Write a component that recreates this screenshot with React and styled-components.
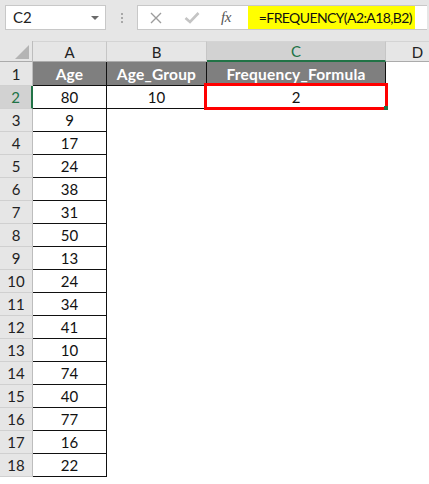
import styled, { createGlobalStyle, css } from 'styled-components'

const ages = [80, 9, 17, 24, 38, 31, 50, 13, 24, 34, 41, 10, 74, 40, 77, 16, 22]

const GlobalStyle = createGlobalStyle`
    html, body {
        margin: 0;
        padding: 0;
        background: #fff;
        overflow: hidden;
    }
    body {
        font-family: Lato, "Liberation Sans", sans-serif;
        width: 429px;
        height: 484px;
    }
`

const App = () => {
    return (
        <Page>
            <GlobalStyle />
            <Toolbar>
                <NameBox>
                    C2
                    <Caret />
                </NameBox>
                <Grip>
                    <span />
                    <span />
                    <span />
                </Grip>
                <FormulaBox>
                    <ToolIcon width="12" height="12" viewBox="0 0 12 12" $left={12}>
                        <path d="M1 1 L11 11 M11 1 L1 11" stroke="#9c9c9c" strokeWidth="1.4" fill="none" />
                    </ToolIcon>
                    <ToolIcon width="16" height="13" viewBox="0 0 16 13" $left={22}>
                        <path d="M1.5 7 L6 11 L14.5 2" stroke="#c4c4c4" strokeWidth="2.6" fill="none" />
                    </ToolIcon>
                    <Fx>fx</Fx>
                    <Formula>=FREQUENCY(A2:A18,B2)</Formula>
                </FormulaBox>
            </Toolbar>
            <Sheet>
                <Corner />
                <ColHead>A</ColHead>
                <ColHead>B</ColHead>
                <ColHead $selected>C</ColHead>
                <ColHead>D</ColHead>

                <RowHead>1</RowHead>
                <Cell $kind="head">Age</Cell>
                <Cell $kind="head">Age_Group</Cell>
                <Cell $kind="head">Frequency_Formula</Cell>
                <Cell />

                <RowHead $selected>2</RowHead>
                <Cell $kind="data">{ages[0]}</Cell>
                <Cell $kind="data">10</Cell>
                <Cell $kind="data" $active>2</Cell>
                <Cell />

                {ages.slice(1).map((age, i) => (
                    <Row key={i} n={i + 3} age={age} />
                ))}
            </Sheet>
        </Page>
    )
}

const Row = ({ n, age }) => (
    <>
        <RowHead>{n}</RowHead>
        <Cell $kind="data">{age}</Cell>
        <Cell />
        <Cell />
        <Cell />
    </>
)

const Page = styled.div`
    width: 429px;
    height: 484px;
    overflow: hidden;
    background: #fff;
`

const Toolbar = styled.div`
    height: 41px;
    box-sizing: border-box;
    background: #e6e6e6;
    display: flex;
    align-items: flex-start;
    padding: 5px 0 0 5px;
`

const NameBox = styled.div`
    position: relative;
    width: 101px;
    height: 25px;
    box-sizing: border-box;
    background: #fff;
    border: 1px solid #c8c8c8;
    padding-left: 7px;
    font-size: 15px;
    line-height: 23px;
    color: #222;
`

const Caret = styled.span`
    position: absolute;
    right: 6px;
    top: 10px;
    width: 0;
    height: 0;
    border-left: 4px solid transparent;
    border-right: 4px solid transparent;
    border-top: 4px solid #6a6a6a;
`

const Grip = styled.div`
    width: 31px;
    height: 25px;
    display: flex;
    flex-direction: column;
    align-items: center;
    justify-content: center;
    gap: 2px;
    span {
        width: 2px;
        height: 2px;
        background: #a8a8a8;
    }
`

const FormulaBox = styled.div`
    flex: 1;
    height: 25px;
    box-sizing: border-box;
    margin-right: 2px;
    background: #fff;
    border: 1px solid #c8c8c8;
    border-right: none;
    display: flex;
    align-items: center;
`

const ToolIcon = styled.svg`
    margin-left: ${p => p.$left}px;
    flex: none;
`

const Fx = styled.span`
    margin-left: 21px;
    font-family: "Liberation Serif", serif;
    font-style: italic;
    font-size: 15px;
    color: #555;
    letter-spacing: -0.5px;
`

const Formula = styled.div`
    margin-left: 17px;
    height: 23px;
    width: 167px;
    box-sizing: border-box;
    background: #ffff00;
    padding-left: 11px;
    font-size: 14px;
    letter-spacing: -0.6px;
    line-height: 23px;
    color: #111;
    white-space: nowrap;
    overflow: hidden;
`

const Sheet = styled.div`
    display: grid;
    grid-template-columns: 33px 74px 100px 179px 64px;
    grid-template-rows: 21px 24px;
    grid-auto-rows: 23px;
    font-size: 15px;
    color: #111;
`

const Corner = styled.div`
    position: relative;
    background: #e6e6e6;
    border-right: 1px solid #bdbdbd;
    border-bottom: 1px solid #ababab;
    box-sizing: border-box;
    &::after {
        content: '';
        position: absolute;
        right: 3px;
        bottom: 2px;
        width: 14px;
        height: 14px;
        background: #b4b4b4;
        clip-path: polygon(100% 0, 100% 100%, 0 100%);
    }
`

const ColHead = styled.div`
    box-sizing: border-box;
    background: #e6e6e6;
    border-right: 1px solid #c6c6c6;
    border-bottom: 1px solid #ababab;
    border-top: 1px solid #d4d4d4;
    display: flex;
    align-items: center;
    justify-content: center;
    font-size: 15px;
    color: #222;
    ${p => p.$selected && css`
        background: #d2d2d2;
        color: #217346;
        border-bottom: 2px solid #217346;
    `}
`

const RowHead = styled.div`
    box-sizing: border-box;
    background: #e6e6e6;
    border-right: 1px solid #bdbdbd;
    border-bottom: 1px solid #d0d0d0;
    display: flex;
    align-items: center;
    justify-content: center;
    font-size: 15px;
    color: #222;
    ${p => p.$selected && css`
        background: #d2d2d2;
        color: #217346;
        border-right: 2px solid #217346;
    `}
`

const Cell = styled.div`
    position: relative;
    box-sizing: border-box;
    display: flex;
    align-items: center;
    justify-content: center;
    white-space: nowrap;
    ${p => p.$kind === 'head' && css`
        background: #7f7f7f;
        color: #fff;
        font-weight: 700;
        font-size: 15.5px;
        letter-spacing: 0.2px;
        border-right: 1px solid #111;
        border-bottom: 1px solid #111;
    `}
    ${p => p.$kind === 'data' && css`
        background: #fff;
        border-right: 1px solid #111;
        border-bottom: 1px solid #111;
    `}
    ${p => p.$active && css`
        &::before {
            content: '';
            position: absolute;
            left: -3px;
            top: -3px;
            right: -3px;
            bottom: -2px;
            border: 3px solid #ff0000;
            pointer-events: none;
        }
        &::after {
            content: '';
            position: absolute;
            right: -3px;
            bottom: -2px;
            width: 4px;
            height: 4px;
            background: #217346;
        }
    `}
`

export default App
